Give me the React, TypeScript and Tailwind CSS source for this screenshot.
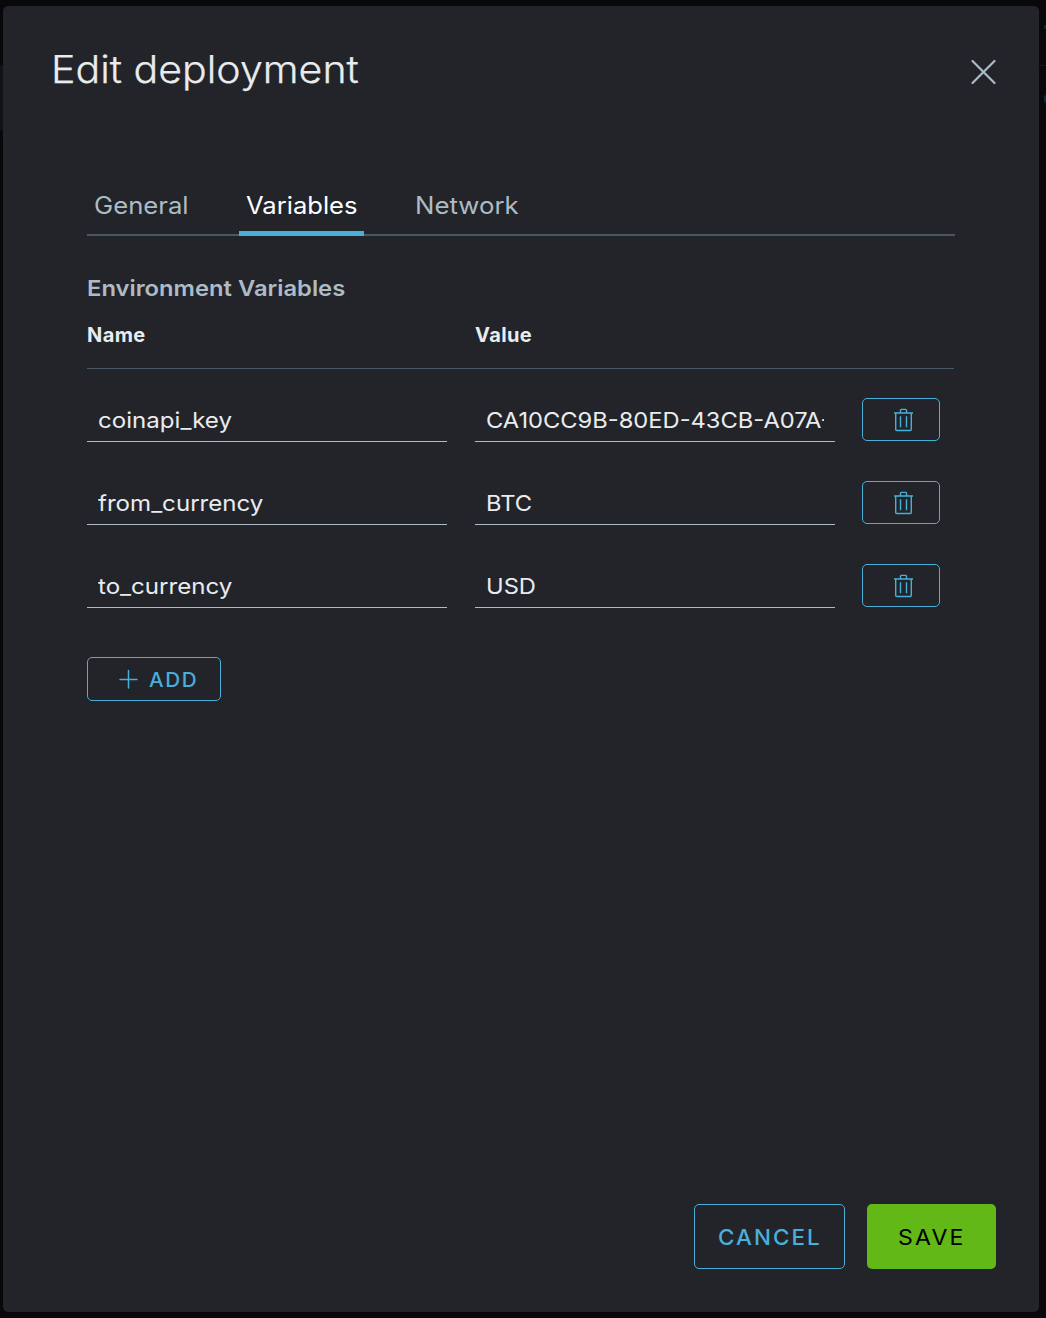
import { useState } from "react";

const tabs = [
  { label: "General", box: "w-[108px] pl-[7px] mr-[44px]", text: "scale-x-[1.07]" },
  { label: "Variables", box: "w-[125px] pl-[7px] mr-[44px]", text: "scale-x-[1.065]" },
  { label: "Network", box: "w-[118px] pl-[7px]", text: "scale-x-[1.075]" },
];

const initialRows = [
  { name: "coinapi_key", value: "CA10CC9B-80ED-43CB-A07A-" },
  { name: "from_currency", value: "BTC" },
  { name: "to_currency", value: "USD" },
];

function TrashIcon() {
  return (
    <svg width="20" height="24" viewBox="0 0 20 24" fill="none" stroke="#49afd9" strokeWidth="1.4" className="ml-[6px] mt-px">
      <path d="M0 5H19M6.5 4.5V2.2Q6.5 1.4 7.3 1.4H11.7Q12.5 1.4 12.5 2.2V4.5M1.7 5V21.4Q1.7 22.5 2.8 22.5H16.2Q17.3 22.5 17.3 21.4V5M6.5 8.2V19.2M12.5 8.2V19.2" />
    </svg>
  );
}

export default function App() {
  const [active, setActive] = useState("Variables");
  return (
    <div className="relative h-[1318px] w-[1046px] overflow-hidden bg-[#08080a] pl-[3px] pt-[6px] font-['Inter',sans-serif] text-[#e9ecef]">
      <div className="absolute left-0 top-[65px] h-[65px] w-[3px] bg-[#111216]" />
      <div className="absolute right-0 top-[65px] h-px w-[7px] bg-[#15161a]" />
      <div className="absolute right-0 top-[25px] h-[4px] w-[2px] bg-[#18242d]" />
      <div className="absolute right-0 top-[95px] h-[8px] w-[2px] rounded-l-full bg-[#0b2a42]" />

      <div role="dialog" className="relative flex h-[1306px] w-[1036px] flex-col rounded-[5px] bg-[#22242a]">
        <header className="flex h-[130px] items-start justify-between pl-[48px] pr-[42px] pt-[40px]">
          <h1 className="origin-left scale-x-[1.095] whitespace-nowrap text-[37.5px] font-light leading-[48px] [-webkit-text-stroke:0.25px_#e9ecef]">
            Edit deployment
          </h1>
          <button aria-label="Close" className="mt-[12px]">
            <svg width="27" height="27" viewBox="0 0 27 27" stroke="#adbbc4" strokeWidth="2.2" strokeLinecap="round">
              <path d="M2.5 3L24.5 25M24.5 3L2.5 25" />
            </svg>
          </button>
        </header>

        <main className="ml-[84px] w-[868px] flex-1">
          <nav className="mt-[40px] flex h-[60px] shadow-[inset_0_-2px_0_#485764]">
            {tabs.map((t) => (
              <button
                key={t.label}
                onClick={() => setActive(t.label)}
                className={`${t.box} flex h-[60px] items-start pt-[12px] text-[24px] leading-[36px] ${
                  active === t.label ? "border-b-[5px] border-[#49afd9] text-white" : "text-[#adbbc4]"
                }`}
              >
                <span className={`origin-left ${t.text}`}>{t.label}</span>
              </button>
            ))}
          </nav>

          <h2 className="mt-[36px] w-fit origin-left scale-x-[1.08] text-[22px] font-semibold leading-[32px] text-[#adbbc4]">
            Environment Variables
          </h2>
          <div className="mt-[16px] flex h-[49px] w-[867px] border-b border-[#485764] text-[20px] font-bold leading-[30px] tracking-[0.4px]">
            <span className="w-[388px]">Name</span>
            <span>Value</span>
          </div>

          <div className="mt-[29px] flex flex-col gap-[40px]">
            {initialRows.map((r) => (
              <div key={r.name} className="flex h-[43px] w-[853px]">
                <div className="mr-[28px] h-[44px] w-[360px] shrink-0 border-b border-[#adbbc4] px-[11px] text-[22px] leading-[45px]">
                  <div className="w-fit origin-left scale-x-[1.095]">{r.name}</div>
                </div>
                <div className="mr-[27px] h-[44px] w-[360px] shrink-0 border-b border-[#adbbc4] px-[11px] text-[22px] leading-[45px]">
                  <div className="overflow-hidden whitespace-nowrap">
                    <div className="w-fit origin-left scale-x-[1.077]">{r.value}</div>
                  </div>
                </div>
                <button aria-label="Delete" className="flex h-[43px] w-[78px] shrink-0 items-center justify-center rounded-[5px] border border-[#49afd9]">
                  <TrashIcon />
                </button>
              </div>
            ))}
          </div>

          <button className="mt-[50px] flex h-[44px] w-[134px] items-center rounded-[5px] border border-[#49afd9] pl-[31px] text-[20px] font-medium tracking-[1.6px] text-[#49afd9]">
            <svg width="20" height="20" viewBox="0 0 20 20" stroke="currentColor" strokeWidth="1.5" strokeLinecap="round">
              <path d="M9.5 1.5V19M1 10.5H18" />
            </svg>
            <span className="ml-[10px] origin-left scale-x-[1.03] pt-px">ADD</span>
          </button>
        </main>

        <footer className="mb-[43px] mr-[43px] flex justify-end gap-[22px] text-[22px] tracking-[2px]">
          <button className="flex h-[65px] w-[151px] items-center rounded-[5px] border border-[#49afd9] pl-[23px] pt-[2px] font-medium text-[#49afd9]">
            <span className="origin-left scale-x-[1.02]">CANCEL</span>
          </button>
          <button className="flex h-[65px] w-[129px] items-center rounded-[5px] bg-[#62b816] pl-[31px] pt-[2px] text-black">
            <span className="origin-left scale-x-[1.05]">SAVE</span>
          </button>
        </footer>
      </div>
    </div>
  );
}
